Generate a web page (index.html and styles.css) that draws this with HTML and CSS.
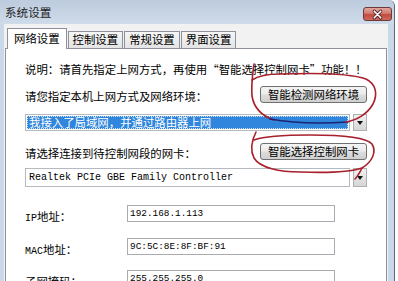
FILE: index.html
```html
<!DOCTYPE html>
<html lang="zh-CN">
<head>
    <meta charset="UTF-8">
    <title>系统设置</title>
    <link rel="stylesheet" href="styles.css">
</head>
<body>
<div class="window">
    <div class="titlebar">
        <span class="title">系统设置</span>
        <span class="close">
            <svg width="29" height="13" viewBox="0 0 29 13">
                <path d="M11 3 L18 10 M18 3 L11 10" stroke="#4a1e1e" stroke-width="3.4" stroke-linecap="round"/>
                <path d="M11 3 L18 10 M18 3 L11 10" stroke="#fff" stroke-width="1.8" stroke-linecap="round"/>
            </svg>
        </span>
    </div>
    <div class="client">
        <div class="tabs">
            <span class="tab active">网络设置</span>
            <span class="tab">控制设置</span>
            <span class="tab">常规设置</span>
            <span class="tab">界面设置</span>
        </div>
        <div class="panel">
            <p class="note">说明：请首先指定上网方式，再使用“智能选择控制网卡”功能！！</p>

            <div class="row first">
                <span class="label">请您指定本机上网方式及网络环境：</span>
                <span class="btn">智能检测网络环境</span>
            </div>
            <div class="combo selected">
                <div class="field"><span>我接入了局域网，并通过路由器上网</span></div>
                <div class="arrow"></div>
            </div>

            <div class="row second">
                <span class="label">请选择连接到待控制网段的网卡：</span>
                <span class="btn">智能选择控制网卡</span>
            </div>
            <div class="combo card">
                <div class="field">Realtek PCIe GBE Family Controller</div>
                <div class="arrow"></div>
            </div>

            <div class="form">
                <span class="flabel"><b>IP</b>地址：</span>
                <span class="input">192.168.1.113</span>
                <span class="flabel"><b>MAC</b>地址：</span>
                <span class="input">9C:5C:8E:8F:BF:91</span>
                <span class="flabel">子网掩码：</span>
                <span class="input">255.255.255.0</span>
            </div>
        </div>
    </div>

    <!-- hand drawn marks over the screenshot -->
    <svg class="marks" width="398" height="281" viewBox="0 0 398 281">
        <g fill="none" stroke-linecap="round" stroke-width="1.6">
            <path stroke="#a8202c" d="M254,64 C253,72 251,84 252,96 C254,108 262,116 274,120"/>
            <path stroke="#1c2470" d="M270,119 C292,123 320,124 348,122"/>
            <path stroke="#a8202c" d="M346,122 C358,120 368,113 373,104 C378,94 376,84 366,79 C350,73 310,73 280,74 C268,74 258,76 252,80"/>
            <path stroke="#a8202c" d="M256,132 C252,140 250,150 254,158 C260,168 280,172 300,172 C325,173 350,172 362,168 C372,162 377,152 372,144 C366,137 340,135 310,135 C285,135 265,136 254,140"/>
            <path stroke="#a8202c" d="M362,168 C360,172 358,176 355,179"/>
        </g>
    </svg>
</div>
</body>
</html>
```

FILE: styles.css
```css
* {
    padding: 0;
    margin: 0;
    box-sizing: border-box;
}

body {
    background: #fff;
    font-family: "Noto Sans CJK SC", "Liberation Sans", sans-serif;
    font-size: 11.4px;
    color: #000;
    width: 398px;
    height: 281px;
    overflow: hidden;
}

.window {
    position: relative;
    width: 395px;
    height: 300px;
    background: #c9d9ea;
    border-right: 1px solid #5a6a7c;
    border-top-right-radius: 6px;
}

.titlebar {
    height: 24px;
    display: flex;
    align-items: flex-start;
    justify-content: space-between;
    padding: 5px 2px 0 5px;
    background: linear-gradient(180deg, #bccbdd 0%, #cfdbe9 100%);
    border-top-right-radius: 6px;
}

.title {
    line-height: 15px;
    font-size: 11.6px;
    color: #1e1e1e;
}

.close {
    width: 29px;
    height: 14px;
    margin-top: 2px;
    border: 1px solid #6b3a3a;
    border-radius: 3px;
    background: linear-gradient(180deg, #e3a59c 0%, #d07a70 45%, #c24a3e 55%, #cf6a5c 100%);
    display: flex;
    align-items: center;
    justify-content: center;
}

.client {
    margin: 0 6px 0 4px;
    height: 276px;
    background: #f2f2f2;
    padding: 4px 1px 0 1px;
}

.tabs {
    height: 20px;
    display: flex;
    align-items: flex-end;
    padding-left: 2px;
    position: relative;
    z-index: 1;
}

.tab {
    height: 17px;
    line-height: 15px;
    padding: 0 4px;
    border: 1px solid #8e9199;
    border-bottom: none;
    background: linear-gradient(180deg, #f6f6f6, #e4e4e4);
    margin-right: 1px;
}

.tab.active {
    height: 21px;
    padding: 2px 6px 0 6px;
    background: #fff;
    margin-bottom: -1px;
}

.panel {
    height: 260px;
    border: 1px solid #8e9199;
    background: #fff;
    padding: 12px 19px 0 19px;
}

.note {
    line-height: 16px;
    height: 16px;
    white-space: nowrap;
}

.row {
    display: flex;
    justify-content: space-between;
    align-items: center;
    height: 17px;
}

.row.first {
    margin-top: 9px;
}

.row.second {
    margin-top: 12px;
}

.label {
    line-height: 16px;
    padding-top: 3px;
    white-space: nowrap;
}

.btn {
    width: 107px;
    height: 17px;
    line-height: 15px;
    text-align: center;
    border: 1px solid #707070;
    border-radius: 3px;
    background: linear-gradient(180deg, #f4f4f4 0%, #ebebeb 48%, #dddddd 52%, #cfcfcf 100%);
}

.combo {
    display: flex;
    gap: 3px;
    height: 17px;
    margin-top: 11px;
    background: #fff;
}

.combo .field {
    flex: 1;
    border: 1px solid #b5b9c0;
    white-space: nowrap;
    overflow: hidden;
}

.combo.selected .field {
    padding: 1px;
}

.combo.selected .field span {
    display: block;
    height: 13px;
    line-height: 12px;
    padding-left: 2px;
    background: #2f86dc;
    color: #fff;
    outline: 1px dotted #cfe0f2;
    outline-offset: -1px;
}

.combo.card {
    height: 19px;
    margin-top: 8px;
}

.combo.card .field {
    font-family: "Liberation Mono", monospace;
    font-size: 10px;
    line-height: 17px;
    padding-left: 3px;
}

.combo .arrow {
    width: 14px;
    border: 1px solid #b0b0b0;
    background: linear-gradient(180deg, #f1f1f1, #d6d6d6);
    display: flex;
    align-items: center;
    justify-content: center;
}

.combo .arrow::after {
    content: "";
    border-left: 3px solid transparent;
    border-right: 3px solid transparent;
    border-top: 4px solid #111;
}

.form {
    margin-top: 18px;
    display: grid;
    grid-template-columns: 102px 208px;
    grid-auto-rows: 17px;
    row-gap: 15.5px;
    align-items: center;
}

.flabel {
    white-space: nowrap;
    padding-top: 5px;
}

.flabel b {
    font-family: "Liberation Mono", monospace;
    font-size: 10px;
    font-weight: normal;
}

.input {
    height: 17px;
    border: 1px solid #a9abb1;
    background: #fff;
    font-family: "Liberation Mono", monospace;
    font-size: 9.4px;
    line-height: 15px;
    padding-left: 2px;
}

.marks {
    position: absolute;
    left: 0;
    top: 0;
    pointer-events: none;
}
```
